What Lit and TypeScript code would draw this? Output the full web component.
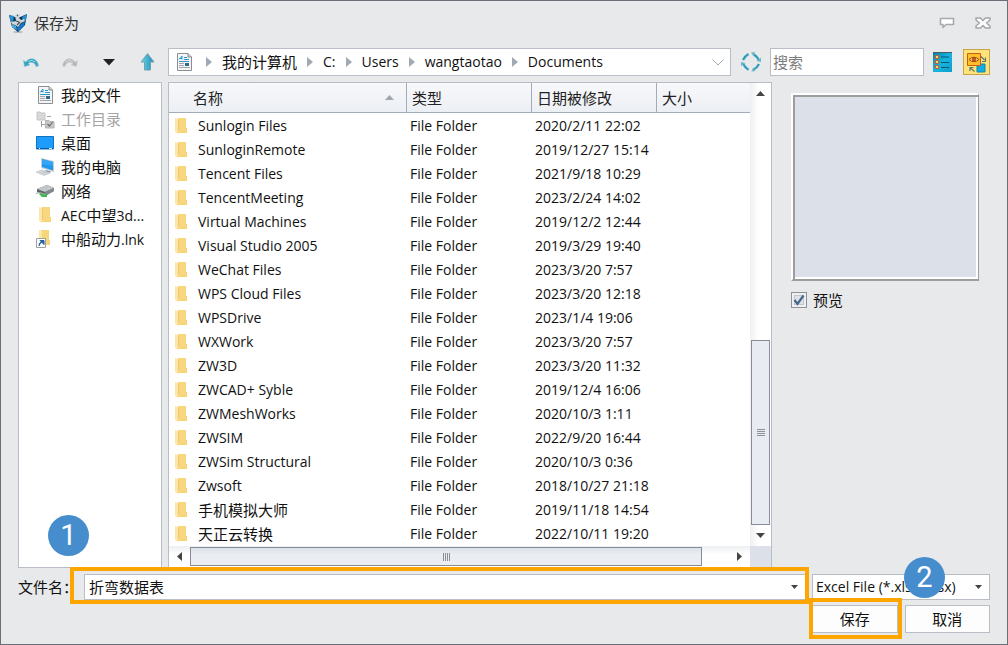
import { LitElement, html, css, svg, nothing } from "lit";
import { customElement, state } from "lit/decorators.js";
import { classMap } from "lit/directives/class-map.js";

type FileRow = { name: string; date: string };
type Place = { label: string; icon: unknown; muted?: boolean };

const FILES: FileRow[] = [
  { name: "Sunlogin Files", date: "2020/2/11 22:02" },
  { name: "SunloginRemote", date: "2019/12/27 15:14" },
  { name: "Tencent Files", date: "2021/9/18 10:29" },
  { name: "TencentMeeting", date: "2023/2/24 14:02" },
  { name: "Virtual Machines", date: "2019/12/2 12:44" },
  { name: "Visual Studio 2005", date: "2019/3/29 19:40" },
  { name: "WeChat Files", date: "2023/3/20 7:57" },
  { name: "WPS Cloud Files", date: "2023/3/20 12:18" },
  { name: "WPSDrive", date: "2023/1/4 19:06" },
  { name: "WXWork", date: "2023/3/20 7:57" },
  { name: "ZW3D", date: "2023/3/20 11:32" },
  { name: "ZWCAD+ Syble", date: "2019/12/4 16:06" },
  { name: "ZWMeshWorks", date: "2020/10/3 1:11" },
  { name: "ZWSIM", date: "2022/9/20 16:44" },
  { name: "ZWSim Structural", date: "2020/10/3 0:36" },
  { name: "Zwsoft", date: "2018/10/27 21:18" },
  { name: "手机模拟大师", date: "2019/11/18 14:54" },
  { name: "天正云转换", date: "2022/10/11 19:20" },
];

const PATH = ["我的计算机", "C:", "Users", "wangtaotao", "Documents"];

const isCjk = (s: string) => /[\u4e00-\u9fff]/.test(s);

/* Han runs are set one pixel larger than Latin runs */
const mixed = (s: string) =>
  s
    .split(/([\u4e00-\u9fff]+)/)
    .filter(Boolean)
    .map((part) => (isCjk(part) ? html`<span class="han">${part}</span>` : part));

const icon = (w: number, h: number, body: unknown) =>
  html`<svg class="icon" width=${w} height=${h} viewBox="0 0 ${w} ${h}" aria-hidden="true">${body}</svg>`;

const logoIcon = icon(19, 20, svg`
  <ellipse cx="9" cy="19" rx="5" ry="1" fill="#b9bbbd"/>
  <path d="M0 2 L9 5 L18 1 L16 12 L9 19 L3 14Z" fill="#0b3656"/>
  <path d="M0 2 L5 3 L4 9 L2 9Z M18 1 L13 4 L14 8 L17 7Z" fill="#2a8fd0"/>
  <path d="M11 12 L16 8 L15 13 L9 19 L8 15Z" fill="#1676c6"/>
  <path d="M3 11 L7 13 L8 17 L3 14Z" fill="#48a9e0"/>
  <path d="M6 2 Q9 -1 11 2 L10 5 L12 7 L15 6 L16 8 L12 10 L9 14 L6 12 L3 11 L2 9 L7 8Z" fill="#cfd6da"/>
  <path d="M8 2 L9 3 M7 8 L10 9 M8 12 L11 9" stroke="#4a5359" stroke-width="1.2"/>`);

const arrowShape = "M0.5 3.500 L1.500 9.500 L7 8 L5 6.800 Q8.500 3.800 12 7 L13 9.500 L15.500 9 Q15 3.500 10 1.800 Q5.500 1 2.800 5Z";
const undoIcon = icon(16, 11, svg`<path d=${arrowShape} fill="#35a3bf" stroke="#7fc3d3" stroke-width=".6"/>
  <path d="M5 4.500 Q9 2 12.500 5" stroke="#8edbea" fill="none"/>`);
const redoIcon = icon(16, 11, svg`<g transform="translate(16 0) scale(-1 1)"><path d=${arrowShape} fill="#b5b7b9" stroke="#cfd0d2" stroke-width=".6"/>
  <path d="M5 4.500 Q9 2 12.500 5" stroke="#d9dadb" fill="none"/></g>`);
const caretIcon = icon(12, 7, svg`<path d="M0 0H12L6 6.500Z" fill="#222"/>`);
const upIcon = icon(15, 18, svg`<defs><linearGradient id="ug" x2="1"><stop offset="0" stop-color="#6fd3e8"/><stop offset="1" stop-color="#1a8fb4"/></linearGradient></defs>
  <path d="M7.500 .6 L14 9 H10.500 V17 H4.500 V9 H1Z" fill="url(#ug)" stroke="#6f9cab" stroke-width=".9"/>`);
const docIcon = icon(15, 18, svg`<path d="M.5 .5H11L14.500 4V17.500H.5Z" fill="#f3f5f6" stroke="#8b8f92"/>
  <path d="M11 .5V4H14.500" fill="#c9cdd0" stroke="#777c80" stroke-width=".8"/>
  <path d="M2 6.500 L5 3 V6.500 M3 5.500 H5 M7 4.500H10 M7 6.500H12 M2 8.500H12" stroke="#2c97cf" fill="none"/>
  <path d="M2 10.500H7 M2 12.500H7 M2 14.500H13" stroke="#a0a4a7"/>
  <path d="M8 10H12V13H8Z" fill="#31698c"/>`);
const treeIcon = icon(19, 19, svg`<path d="M1 2H4L5 3H9V10H1Z" fill="#d8d8d8" stroke="#c6c6c6"/>
  <path d="M11 6.500H15 M5.500 11V17 M5.500 14.500H9" stroke="#a2a2a2" fill="none"/>
  <path d="M9.500 10.500H13L14 11.500H18V18H9.500Z" fill="#c6c6c6" stroke="#b5b5b5"/>
  <path d="M11.500 14 L13.500 16 L16.500 12" stroke="#6e6e6e" stroke-width="1.200" fill="none"/>`);
const desktopIcon = icon(18, 14, svg`<path d="M.5 .5H17.500V13H.5Z" fill="#1e9cfb" stroke="#1471bd"/>
  <path d="M1 12.500H17" stroke="#0c5da0"/><path d="M3 12.500H4 M13 12.500H16" stroke="#d8efff"/>`);
const pcIcon = icon(19, 18, svg`<path d="M5 0 L18 3 V14 L5 10Z" fill="#c3ced6"/><path d="M6 1 L17 4 V12.500 L6 9Z" fill="#1f97f0"/>
  <path d="M6 1 L17 4 V8 L6 6Z" fill="#35a4f5"/><path d="M10 12 L15 13.500 L14 15 L9 13.500Z" fill="#8f979d"/>
  <path d="M0 14 L6 12 L14 15 L8 17.500Z" fill="#dfe3e6" stroke="#b4bbc0" stroke-width=".6"/>
  <path d="M3 14 L10 16.300 M5.500 13 L12 15.300" stroke="#a5adb3" stroke-width=".6"/>`);
const netIcon = icon(19, 14, svg`<path d="M1 5 L11 1 L18 4 L18 7 L9 12 L1 8Z" fill="#5d6266"/>
  <path d="M1 5 L11 1 L18 4 L9 8Z" fill="#c4c7c9"/><path d="M9 8 L18 4 V7 L9 12Z" fill="#84898d"/>
  <path d="M3 10 L6 9 L11 10 V13 L6 13Z" fill="#3fb54d"/><path d="M0 9.500 L4 8.500 L9 10.500" stroke="#a9adb0" fill="none"/>`);
const folderIcon = icon(13, 16, svg`<path d="M3 0H11V10H12V15H3Z" fill="#f3cf6c"/><path d="M4 0H10.500V10.500H11.500V14.500H4Z" fill="#f7d880"/>
  <path d="M0 0 L3 1 L4 3 V13 L3 16 L0 14Z" fill="#fbe7ab"/><path d="M3.500 2 V13" stroke="#eec766"/>`);
const linkIcon = icon(18, 18, svg`<path d="M5 0H13V10H14V15H5Z" fill="#f6d67a"/><path d="M3 0 L6 1.500 V15 L3 14Z" fill="#fbe6a2"/>
  <path d="M.5 8.500H9.500V17.500H.5Z" fill="#fff" stroke="#9a9fa3"/>
  <path d="M3 16 Q2.500 12.500 6 12 M4 10.500H8V14.500Z" fill="#235f9f" stroke="#235f9f" stroke-width="1"/>`);
const crumbArrow = icon(6, 10, svg`<path d="M0 0 L6 5 L0 10Z" fill="#a1a9b4"/>`);
const chevronIcon = icon(12, 7, svg`<path d="M.5 .5 L6 6 L11.500 .5" fill="none" stroke="#a6aab0"/>`);
const refreshIcon = icon(20, 20, svg`<g fill="none" stroke="#2e9dbb" stroke-width="2.200">
  <path d="M7.500 2 Q4 4 2 8"/><path d="M13 2.500 Q16 4.500 17.800 8"/><path d="M18 12 Q16 16 12.500 17.500"/><path d="M2.200 12 Q4 15.500 7.500 17.800"/></g>
  <path d="M10 .5 L14 0 L12.500 4.500Z M20 5.500 V10 L15.500 9Z M10.500 19.500 L14.500 19 L12 15.500Z M0 14 V10 L4.500 11Z" fill="#6db5c8"/>`);
const listIcon = icon(19, 20, svg`<defs><linearGradient id="lg" x2="1" y2="1"><stop offset="0" stop-color="#087fa3"/><stop offset=".5" stop-color="#16b4df"/><stop offset="1" stop-color="#0d9fcb"/></linearGradient></defs>
  <path d="M0 0H19V20H0Z" fill="url(#lg)"/><path d="M0 .5H19" stroke="#4a5c64"/>
  <path d="M8 5H16 M8 10.500H16 M8 15.500H16" stroke="#07566f"/>
  <path d="M2.500 3.500H5.500V6.500H2.500Z M2.500 8.500H5.500V11.500H2.500Z M2.500 13.500H5.500V16.500H2.500Z" fill="#ffd65a" stroke="#d0582c"/>`);
const eyeIcon = icon(21, 21, svg`<path d="M11 12H19V20H11Z" fill="#12ade0" stroke="#0e86b0"/>
  <path d="M1.500 1.500H14.500V13.500H1.500Z" fill="#ffbe28" stroke="#c95f17"/>
  <path d="M3 7.500 Q8 3 13 7.500 Q8 12 3 7.500Z" fill="#ffd87b" stroke="#9c4a14"/><circle cx="8" cy="7.500" r="1.800" fill="#d9571c" stroke="#8a3b10" stroke-width=".6"/>
  <path d="M15 4.500 L18.500 8 M19.500 5.500 V9.500 H16 M8.500 19.500 L4.500 16 M4 19 V15.500 H7.500" fill="none" stroke="#5e7a6a" stroke-width="1.200"/>`);
const chatIcon = icon(16, 12, svg`<path d="M1.500 1.500H14.500V7.500H7L4 10.500V7.500H1.500Z" fill="#fff" stroke="#a7a9ac" stroke-width="1.500" stroke-linejoin="round"/>`);
const closeIcon = icon(16, 12, svg`<path d="M1 1H5.500L8 3.500L10.500 1H15V3L11.500 6L15 9V11H10.500L8 8.500L5.500 11H1V9L4.500 6L1 3Z" fill="#fff" stroke="#a2a4a7" stroke-width="1.500" stroke-linejoin="round"/>`);
const sortIcon = icon(9, 5, svg`<path d="M0 5 L4.500 0 L9 5Z" fill="#a1a7b0"/>`);
const triUp = icon(9, 5, svg`<path d="M0 5 L4.500 0 L9 5Z" fill="#444"/>`);
const triDown = icon(9, 5, svg`<path d="M0 0 H9 L4.500 5Z" fill="#444"/>`);
const triLeft = icon(5, 9, svg`<path d="M5 0 V9 L0 4.500Z" fill="#444"/>`);
const triRight = icon(5, 9, svg`<path d="M0 0 V9 L5 4.500Z" fill="#444"/>`);
const smallCaret = icon(7, 4, svg`<path d="M0 0 H7 L3.500 4Z" fill="#444"/>`);
const gripV = icon(8, 7, svg`<path d="M0 .5H8 M0 2.500H8 M0 4.500H8 M0 6.500H8" stroke="#8c8f94"/>`);
const gripH = icon(7, 8, svg`<path d="M.5 0V8 M2.500 0V8 M4.500 0V8 M6.500 0V8" stroke="#8c8f94"/>`);

const PLACES: Place[] = [
  { label: "我的文件", icon: docIcon },
  { label: "工作目录", icon: treeIcon, muted: true },
  { label: "桌面", icon: desktopIcon },
  { label: "我的电脑", icon: pcIcon },
  { label: "网络", icon: netIcon },
  { label: "AEC中望3d...", icon: folderIcon },
  { label: "中船动力.lnk", icon: linkIcon },
];

@customElement("app-root")
export class SaveDialog extends LitElement {
  @state() private fileName = "折弯数据表";
  @state() private preview = true;

  static styles = css`
    :host {
      display: block;
      font: 14px/20px "Open Sans", "Noto Sans CJK SC", sans-serif;
      color: #111;
    }
    * { box-sizing: border-box; }
    button, input, select { font: inherit; color: inherit; margin: 0; border-radius: 0; }
    button { padding: 0; border: 0; background: none; display: flex; align-items: center; justify-content: center; }
    .icon { display: block; flex: none; }
    .han { font-size: 15px; }

    .window {
      display: flex;
      flex-direction: column;
      min-height: 100vh;
      padding: 0 17px 11px;
      background: #e8e9eb;
      border: 1px solid #6a6f78;
    }

    .title { display: flex; align-items: center; height: 47px; margin: 0 -1px 0 -9px; padding-bottom: 4px; }
    .title h1 { flex: 1; margin: 0 0 0 6px; font-size: 15px; font-weight: 400; color: #333; }
    .title .tools { display: flex; gap: 20px; }

    .toolbar { display: flex; align-items: center; height: 28px; margin-bottom: 6px; }
    .nav { display: grid; grid-template-columns: repeat(4, 39px); width: 150px; margin-left: -7px; margin-right: 7px; }
    .nav button { height: 28px; }
    .address {
      flex: 1;
      min-width: 0;
      display: flex;
      align-items: center;
      height: 28px;
      padding: 0 6px 0 8px;
      background: #fff;
      border: 1px solid #b9bec6;
    }
    .crumbs { flex: 1; display: flex; align-items: center; gap: 10px; margin: 0 0 0 14px; padding: 0; list-style: none; }
    .crumbs li { display: flex; align-items: center; gap: 10px; }
    .crumbs a { color: inherit; text-decoration: none; }
    .refresh { width: 39px; height: 28px; }
    .search { width: 154px; height: 28px; padding: 0 2px; background: #fff; border: 1px solid #b9bec6; font-size: 15px; }
    .search::placeholder { color: #7c7c7c; opacity: 1; }
    .views { display: flex; align-items: center; gap: 11px; margin-left: 9px; }
    .toggle { width: 27px; height: 26px; background: #ffe27a; border: 1px solid #c9a54a; }

    .main { flex: 1; display: flex; gap: 6px; margin-bottom: 6px; }
    .places { flex: none; width: 144px; margin: 0; padding: 0; list-style: none; background: #fff; border: 1px solid #b9bec6; }
    .places a { display: grid; grid-template-columns: 20px 1fr; column-gap: 6px; align-items: center; height: 24px; padding-left: 16px; color: inherit; text-decoration: none; white-space: nowrap; }
    .places .icon { justify-self: center; }
    .places .muted { color: #a5a5a5; }

    .list {
      flex: 1;
      min-width: 0;
      display: grid;
      grid-template: 1fr 21px / 1fr 21px;
      background: #fff;
      border: 1px solid #b9bec6;
    }
    table { width: 100%; table-layout: fixed; border-collapse: separate; border-spacing: 0; align-self: start; }
    th {
      height: 30px;
      padding: 0 5px;
      text-align: left;
      font-size: 15px;
      font-weight: 400;
      color: #222;
      background: linear-gradient(#f7f8fa, #eceff4);
      border-bottom: 1px solid #a3abb6;
    }
    th + th { border-left: 1px solid #a3abb6; }
    th:first-child { padding: 0 12px 0 24px; }
    .sort { display: flex; align-items: center; justify-content: space-between; }
    td { height: 24px; padding: 2px 4px 0; white-space: nowrap; }
    td:first-child { padding-left: 6px; }
    .name { display: flex; align-items: center; gap: 10px; }
    .c-name { width: 237px; }
    .c-mid { width: 125px; }

    .vbar { display: flex; flex-direction: column; background: linear-gradient(90deg, #eeeff1, #fff 40%); }
    .hbar { display: flex; background: linear-gradient(#eeeff1, #fff 40%); }
    .vbar button { height: 21px; }
    .hbar button { width: 21px; }
    .track { flex: 1; display: flex; }
    .vbar .track { flex-direction: column; justify-content: flex-end; }
    .thumb { display: flex; align-items: center; justify-content: center; border: 1px solid #878d97; background: linear-gradient(#dde1e8, #eaeef3 40%); }
    .vbar .thumb { height: 44%; margin: 0 1px; background: #e8ecf2; }
    .hbar .thumb { width: 95%; margin: 1px 0; }
    .corner { background: #dce0e8; }

    .side { flex: none; width: 212px; padding: 11px 11px 0 13px; }
    .canvas { height: 188px; background: #dce0e9; border: 2px solid #fff; border-right: 1px solid #9d9d9d; border-bottom: 2px solid #9d9d9d; box-shadow: inset 2px 2px #9d9d9d, inset -2px -2px #fff; }
    .check { display: flex; align-items: center; gap: 6px; width: max-content; margin-top: 9px; font-size: 15px; }
    .check input {
      appearance: none;
      width: 16px;
      height: 16px;
      border: 1px solid #8f9194;
      background: #dfe3e8;
      box-shadow: inset 0 0 0 2px #eef0f2, inset 0 0 0 3px #bfc6cf;
    }
    .tick { display: grid; }
    .tick > * { grid-area: 1 / 1; place-self: center; }
    .tick .icon { pointer-events: none; }

    .footer { display: grid; grid-template-columns: 60px 1fr 178px; gap: 5px 6px; align-items: center; }
    .footer label { font-size: 15px; white-space: nowrap; }
    .combo { position: relative; display: flex; height: 26px; background: #fff; border: 1px solid #b9bec6; }
    .combo input { flex: 1; min-width: 0; padding: 0 4px; border: 0; background: none; font-size: 15px; }
    .combo button { width: 21px; }
    .type { position: relative; display: grid; align-items: center; }
    .type > * { grid-area: 1 / 1; }
    .type select { appearance: none; width: 100%; height: 26px; padding: 0 20px 0 3px; background: #fff; border: 1px solid #b9bec6; }
    .type > .icon { justify-self: end; margin-right: 8px; pointer-events: none; }
    .actions { grid-column: 3; display: grid; grid-template-columns: 1fr 1fr; gap: 7px; }
    .action { position: relative; }
    .action button { width: 100%; height: 28px; background: #fdfdfd; border: 1px solid #b9bec6; font-size: 15px; }

    .frame { position: absolute; border: 4px solid #ffa500; pointer-events: none; }
    .frame.on-name { inset: -8px -4px -5px -15px; }
    .frame.on-save { inset: -7px -4px -6px -3px; }
    .step {
      position: absolute;
      width: 41px;
      height: 41px;
      border-radius: 50%;
      background: #468dcd;
      color: #fff;
      font: 29px/41px Roboto, sans-serif;
      text-align: center;
      pointer-events: none;
    }
    .step.one { left: -37px; top: -60px; }
    .step.two { right: 45px; top: -17px; }
  `;

  render() {
    return html`
      <div class="window">
        <header class="title">
          ${logoIcon}
          <h1>保存为</h1>
          <div class="tools">
            <button aria-label="反馈">${chatIcon}</button>
            <button aria-label="关闭">${closeIcon}</button>
          </div>
        </header>

        <div class="toolbar">
          <div class="nav">
            <button aria-label="后退">${undoIcon}</button>
            <button aria-label="前进">${redoIcon}</button>
            <button aria-label="历史">${caretIcon}</button>
            <button aria-label="向上">${upIcon}</button>
          </div>
          <nav class="address">
            ${docIcon}
            <ol class="crumbs">
              ${PATH.map((p) => html`<li>${crumbArrow}<a href="#">${mixed(p)}</a></li>`)}
            </ol>
            <button aria-label="展开路径">${chevronIcon}</button>
          </nav>
          <button class="refresh" aria-label="刷新">${refreshIcon}</button>
          <input class="search" type="search" placeholder="搜索" aria-label="搜索" />
          <div class="views">
            <button aria-label="列表">${listIcon}</button>
            <button class="toggle" aria-label="预览窗格" aria-pressed="true">${eyeIcon}</button>
          </div>
        </div>

        <div class="main">
          <ul class="places">
            ${PLACES.map(
              (p) => html`<li><a href="#" class=${classMap({ muted: !!p.muted })}>${p.icon}<span>${mixed(p.label)}</span></a></li>`
            )}
          </ul>

          <section class="list">
            <table>
              <colgroup><col class="c-name" /><col class="c-mid" /><col class="c-mid" /><col /></colgroup>
              <thead>
                <tr>
                  <th aria-sort="ascending"><div class="sort">名称${sortIcon}</div></th>
                  <th>类型</th>
                  <th>日期被修改</th>
                  <th>大小</th>
                </tr>
              </thead>
              <tbody>
                ${FILES.map(
                  (f) => html`<tr>
                    <td><div class="name">${folderIcon}<span>${mixed(f.name)}</span></div></td>
                    <td>File Folder</td>
                    <td>${f.date}</td>
                    <td></td>
                  </tr>`
                )}
              </tbody>
            </table>
            <div class="vbar">
              <button aria-label="向上滚动">${triUp}</button>
              <div class="track"><div class="thumb">${gripV}</div></div>
              <button aria-label="向下滚动">${triDown}</button>
            </div>
            <div class="hbar">
              <button aria-label="向左滚动">${triLeft}</button>
              <div class="track"><div class="thumb">${gripH}</div></div>
              <button aria-label="向右滚动">${triRight}</button>
            </div>
            <div class="corner"></div>
          </section>

          <aside class="side">
            <div class="canvas"></div>
            <label class="check">
              <span class="tick">
                <input type="checkbox" .checked=${this.preview}
                  @change=${(e: Event) => (this.preview = (e.target as HTMLInputElement).checked)} />
                ${this.preview
                  ? icon(12, 12, svg`<path d="M1.500 6 L4.500 10 L10.500 1.500" fill="none" stroke="#49658c" stroke-width="2.200"/>`)
                  : nothing}
              </span>
              预览
            </label>
          </aside>
        </div>

        <footer class="footer">
          <label for="file-name">文件名：</label>
          <div class="combo">
            <input id="file-name" type="text" .value=${this.fileName}
              @input=${(e: Event) => (this.fileName = (e.target as HTMLInputElement).value)} />
            <button aria-label="历史文件名">${smallCaret}</button>
            <span class="frame on-name"></span>
            <span class="step one">1</span>
          </div>
          <div class="type">
            <select aria-label="保存类型"><option>Excel File (*.xls;*.xlsx)</option></select>
            ${smallCaret}
            <span class="step two">2</span>
          </div>
          <div class="actions">
            <div class="action"><button>保存</button><span class="frame on-save"></span></div>
            <div class="action"><button>取消</button></div>
          </div>
        </footer>
      </div>
    `;
  }
}
